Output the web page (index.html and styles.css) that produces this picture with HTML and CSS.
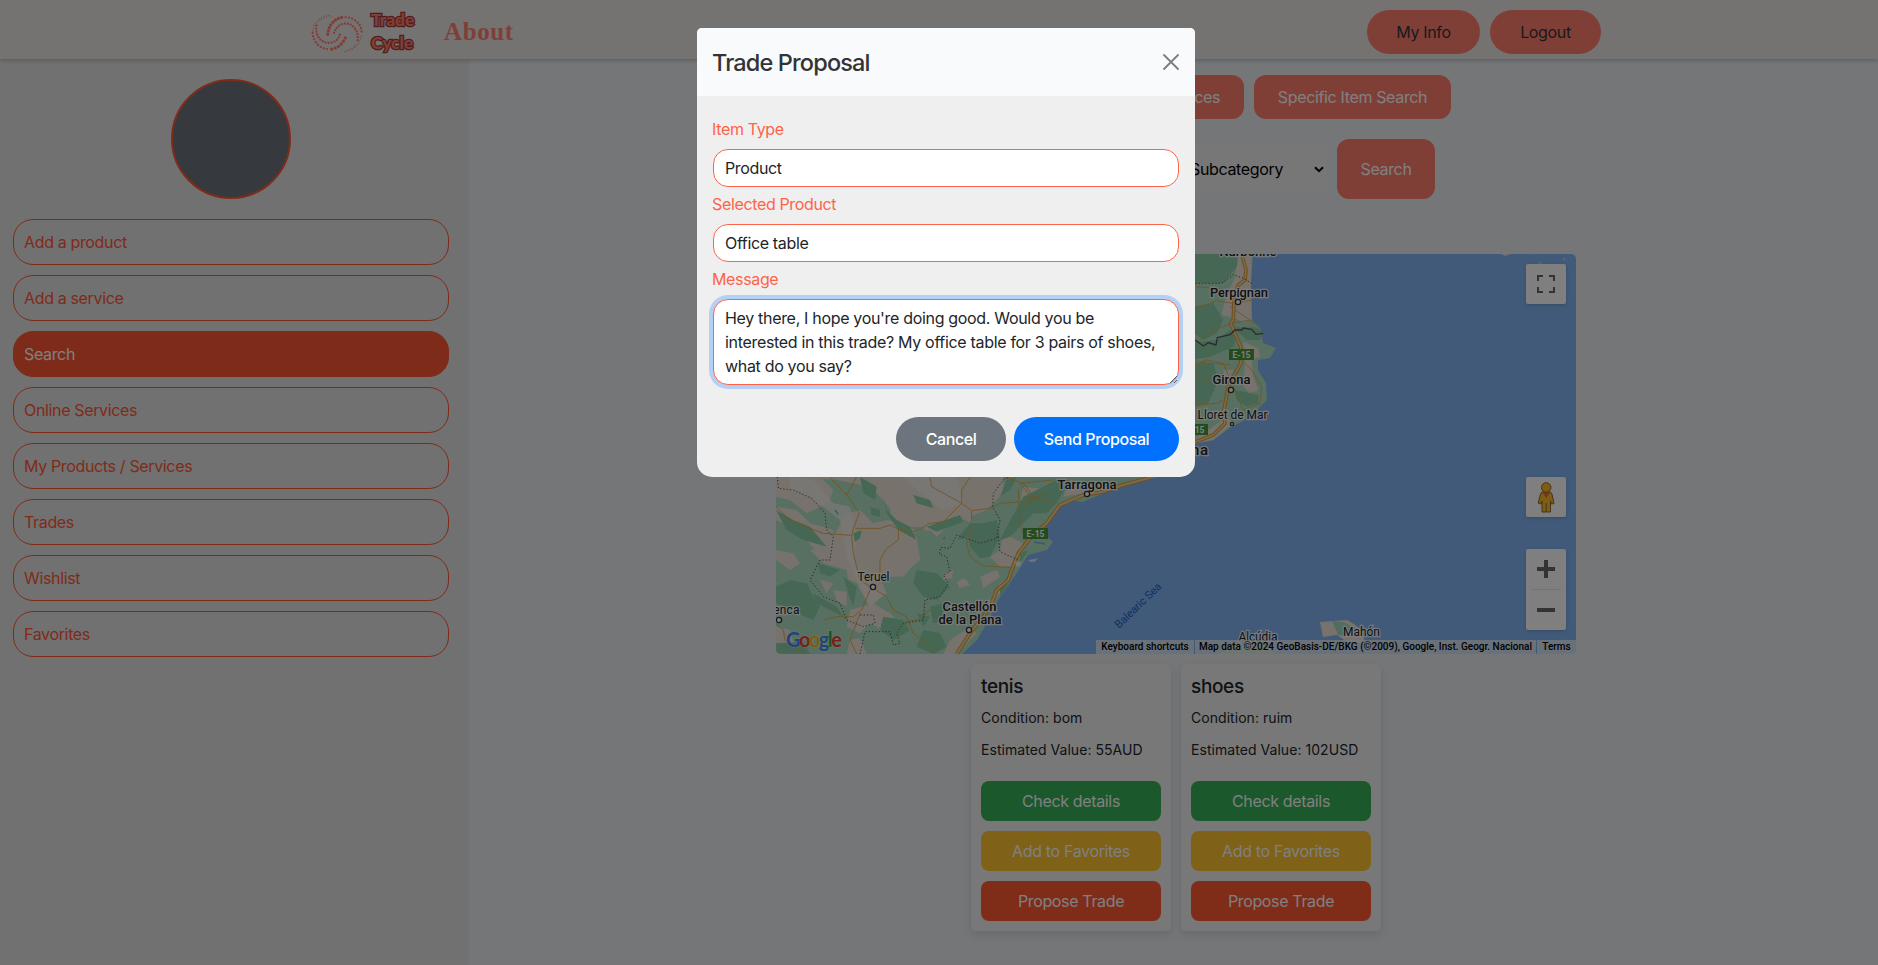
FILE: index.html
```html
<!DOCTYPE html>
<html lang="en">
<head>
<meta charset="utf-8">
<title>Trade Cycle</title>
<link rel="stylesheet" href="styles.css">
</head>
<body>
<header class="navbar">
  <div class="brand">
    <svg class="brand-mark" viewBox="0 0 156 116">
      <g fill="none" stroke="#ff7f71" stroke-linecap="round">
        <path d="M54 4C24 8 6 28 5 52" stroke-width="4" stroke-dasharray="0 8"/>
        <path d="M5 56C6 84 28 104 52 105" stroke-width="7" stroke-dasharray="0 10"/>
        <path d="M62 105C86 100 98 84 105 66" stroke-width="10" stroke-dasharray="0 11"/>
        <path d="M102 112C130 108 150 86 152 60" stroke-width="4" stroke-dasharray="0 8"/>
        <path d="M152 52C150 26 126 9 102 9" stroke-width="7" stroke-dasharray="0 10"/>
        <path d="M92 10C68 14 52 36 50 62" stroke-width="10" stroke-dasharray="0 10"/>
        <path d="M16 34C12 66 30 86 54 86C74 86 86 72 88 56" stroke-width="7" stroke-dasharray="0 9"/>
        <path d="M140 78C144 50 126 28 104 28C84 28 70 46 68 62" stroke-width="7" stroke-dasharray="0 9"/>
        <path d="M24 22C32 12 46 8 70 6" stroke-width="3" stroke-dasharray="0 9"/>
        <path d="M134 92C128 100 118 106 104 108" stroke-width="3" stroke-dasharray="0 9"/>
      </g>
    </svg>
    <div class="brand-name"><span>Trade</span><span>Cycle</span></div>
  </div>
  <a class="nav-about">About</a>
  <div class="nav-actions">
    <button class="pill">My Info</button>
    <button class="pill pill-logout">Logout</button>
  </div>
</header>

<div class="page">
  <aside class="sidebar">
    <div class="avatar"></div>
    <nav class="side-nav">
      <a class="side-link">Add a product</a>
      <a class="side-link">Add a service</a>
      <a class="side-link active">Search</a>
      <a class="side-link">Online Services</a>
      <a class="side-link">My Products / Services</a>
      <a class="side-link">Trades</a>
      <a class="side-link">Wishlist</a>
      <a class="side-link">Favorites</a>
    </nav>
  </aside>

  <main class="content">
    <div class="tabs">
      <button class="tab tab-products">Products</button>
      <button class="tab tab-services">Services</button>
      <button class="tab tab-specific">Specific Item Search</button>
    </div>
    <div class="filters">
      <div class="select select-category"></div>
      <div class="select select-sub"><span>Subcategory</span>
        <svg viewBox="0 0 10 7" width="10" height="7"><path d="M1 1.200 5 5.200 9 1.200" fill="none" stroke="#000" stroke-width="2"/></svg>
      </div>
      <button class="tab search-btn">Search</button>
    </div>

    <div class="map">
      <svg class="map-canvas" viewBox="0 0 800 400">
        <rect width="800" height="400" fill="#84b4f2"/>
        <path fill="#aee0c4" d="M0 0H477L475 29 476 66 484 74 487 89 500 94 494 104 482 106V116L490 129 491 146 474 163 454 174 437 186 419 190 381 223 347 231 307 248 294 246 284 253 271 271 266 278 277 288 271 296 252 301 244 314 234 329 222 346 211 369 201 386 186 400H0Z"/>
        <!-- southern coast and inland -->
        <g transform="translate(-6 206) scale(.33333)">
          <g fill="#f0e5da">
            <path d="M18 50H150L190 90 175 130 110 160 60 120 18 110Z"/>
            <path d="M60 50H700L700 100 650 150 600 170 560 130 520 160 560 190 500 210 440 215 400 190 350 180 310 190 270 150 230 160 200 210 180 260 120 270 160 310 230 330 235 360 290 380 340 340 400 350 450 290 430 220 470 210 380 170 340 120 300 80 200 60Z"/>
            <path d="M370 60H690L680 120 600 150 610 190 560 170 500 230 470 200 420 200 360 170Z"/>
            <path d="M18 140 80 150 120 190 190 210 200 300 150 290 110 240 60 200 18 180Z"/>
            <path d="M700 220 760 250 740 320 690 320 660 290 690 270Z"/>
            <path d="M260 220 360 210 440 230 450 300 390 350 330 350 350 400 300 440 280 400 250 330Z"/>
            <path d="M520 340 550 330 545 355 520 360ZM630 350 680 330 690 350 640 385ZM560 365 585 355 600 375 570 385Z"/>
            <path d="M18 270 70 280 90 310 60 330 18 300ZM150 360 190 370 170 400ZM190 390 230 395 230 440 200 420ZM240 450 310 430 360 460 400 500 360 520 300 490 270 520 230 500Z"/>
            <path d="M690 370 720 350 690 400 650 440ZM540 540 600 500 620 520 560 582H520ZM18 500 60 510 80 582H18ZM240 540 270 535 290 582H230Z"/>
            <path d="M760 80 840 90 850 120 790 150 750 130ZM900 60 1000 90 880 110Z"/>
          </g>
          <g fill="#f4f0ec" opacity=".75">
            <path d="M60 50 130 60 190 130 240 140 260 220 250 290 290 380 340 400 300 440 270 390 230 290 210 180 120 110 60 90Z"/>
            <path d="M400 50H560L580 130 520 150 440 90Z"/>
          </g>
          <g fill="#8ccfa6">
            <path d="M270 50 320 80 315 120 280 100ZM300 140 330 150 330 170 305 165ZM430 105 480 120 490 145 440 130ZM340 110 350 150 380 180 420 200 440 240 385 210 350 160Z"/>
            <path d="M600 190 640 190 680 180 690 230 660 290 630 295 600 260 595 230 560 240ZM690 240 710 200 760 110 860 60 900 60 860 130 830 160 790 160 760 190 720 230Z"/>
            <path d="M18 380 60 360 110 370 130 410 150 440 130 480 80 460 40 440 18 430ZM145 310 210 330 180 350 150 340ZM220 350 260 380 250 440 235 400ZM130 400 200 440 220 470 140 430Z"/>
            <path d="M440 330 500 340 540 380 500 420 460 410 430 370ZM340 470 400 480 420 510 370 540 330 510ZM460 510 510 520 530 560 490 582 440 560ZM480 440 520 430 520 480 490 490ZM250 220 275 210 270 235 255 245ZM750 280 775 270 750 310ZM690 380 715 370 690 410Z"/>
            <path d="M18 150 70 180 120 200 170 260 100 240 50 210ZM470 200 570 165 580 185 500 215ZM710 60 740 50 720 90 690 110ZM18 550 100 545 120 582H18ZM440 460 480 470 460 500Z"/>
          </g>
          <g fill="none" stroke="#e2ac4c" stroke-width="2.800" stroke-linejoin="round">
            <path d="M180 52 230 105 260 50M230 105 268 160 250 205 245 230 250 280 270 360 300 380 350 410 370 450 410 470 430 520 480 560 490 580"/>
            <path d="M18 140 60 180 120 205 160 220 245 226M255 205H330L360 195 390 210 435 215 480 190 520 185 575 130 605 152 660 145 690 130 760 125 830 100"/>
            <path d="M480 52 485 80 575 130 575 90 600 52M605 152V200L590 250 600 290 640 318 725 322"/>
            <path d="M330 370 330 300 350 265 385 240 385 208M300 390 275 450 250 470 200 470 160 480M270 460 255 500 240 540 260 582M18 490 40 510 45 540 100 582M410 485 440 480 480 450"/>
            <path d="M745 90 750 190 765 240M700 50 760 70 790 110 850 130M750 150 790 120 750 70 850 60"/>
          </g>
          <g fill="none" stroke-linejoin="round">
            <path d="M1145 52 1060 75 1000 95 940 105 870 135 830 190 780 235 745 280 725 330 715 360 680 390 665 430 640 470 600 520 560 582" stroke="#dd9c34" stroke-width="12"/>
            <path d="M1145 52 1060 75 1000 95 940 105 870 135 830 190 780 235 745 280 725 330 715 360 680 390 665 430 640 470 600 520 560 582" stroke="#f5d59a" stroke-width="6"/>
            <path d="M22 50 25 85 70 90 125 115 165 160 170 210 190 230 180 300 150 300 120 360 160 410 210 430 230 480 280 500 315 490 310 465 270 465M270 582 285 515 360 515 370 555 390 550 380 520 400 490 460 480 465 420 510 410 535 370 520 345 540 335 530 290 508 282 512 262 540 265 560 225 630 250 680 235 690 180 668 140 670 100 700 60 720 50M685 230 690 275 745 300" stroke="#555" stroke-width="3" stroke-dasharray="4 6"/>
          </g>
          <path fill="#fff" d="M775 300 803 295 795 305 780 306ZM735 305 755 305 750 320 738 318Z" opacity=".7"/>
          <path fill="none" stroke="#78a8f0" stroke-width="4" d="M195 150 205 163M520 237 525 232M793 246 825 252"/>
        </g>
        <!-- northern coast -->
        <g transform="translate(404 -14) scale(.33333)">
          <path fill="#f0e5da" d="M175 42H215L213 130 215 240 190 245 150 230 125 225 135 180 165 110ZM190 305 235 325 240 350 215 360 220 410 235 450 210 460 190 440 195 370ZM130 390 160 390 140 430ZM100 560 140 530 160 550 100 600 46 610 50 590Z"/>
          <g fill="#8ccfa6">
            <path d="M30 42H175L170 80 130 130 60 130 30 125ZM30 200 100 190 130 240 110 280 70 300 30 270Z"/>
            <path d="M46 305 110 300 150 270 170 290 160 320 90 350 30 360ZM46 370 100 370 115 420 85 490 46 500ZM165 450 235 465 235 490 200 500 170 480ZM160 262 230 262 250 280 240 300 200 300Z"/>
          </g>
          <g fill="none" stroke="#e2ac4c" stroke-width="2.800">
            <path d="M46 208 110 182 160 190 215 180M60 300 100 270 155 250 210 240 245 265M46 375 80 360 130 370 160 440M46 495 110 490 130 480M160 440 190 510 240 490 245 440 215 390 185 360M150 375 46 365M46 140 110 145 160 160M150 200 210 240M46 395 90 430"/>
          </g>
          <g fill="none" stroke-linejoin="round">
            <path d="M185 42 198 90 195 120 175 135 162 180 160 240 152 250 182 320 182 370 145 440 130 520 135 550 100 585 46 606" stroke="#dd9c34" stroke-width="11"/>
            <path d="M185 42 198 90 195 120 175 135 162 180 160 240 152 250 182 320 182 370 145 440 130 520 135 550 100 585 46 606" stroke="#f5d59a" stroke-width="5"/>
            <path d="M46 130H125L160 104 190 115 215 130" stroke="#555" stroke-width="3" stroke-dasharray="4 6"/>
            <path d="M46 300 70 318 85 308 108 315 112 293 150 284 165 270 185 270 190 264 215 268 228 283 250 280" stroke="#555" stroke-width="4"/>
          </g>
          <path fill="#f0e5da" d="M965 42H992L975 48Z"/>
          <path fill="#aee0c4" d="M1055 42H1062V46ZM1070 68 1085 66 1085 73ZM1148 58 1157 52 1154 62Z"/>
        </g>
        <!-- islands -->
        <path fill="#f0e5da" d="M544 368 557 367 571 366 578 370 586 376 589 389 571 388 561 381 547 383Z"/>
        <path fill="#a5dbbb" d="M556 367 567 368 580 374 575 382 562 381ZM442 400 464 388 490 390 500 400Z"/>

        <g fill="#4a9a36"><rect x="453" y="95" width="25" height="11"/><rect x="407" y="170" width="25" height="11"/><rect x="247" y="274" width="25" height="11"/></g>
        <g class="road-tag"><text x="465.500" y="104">E-15</text><text x="419.500" y="179">E-15</text><text x="259.500" y="283">E-15</text></g>
        <g class="city">
          <text x="472" y="2" textLength="57">Narbonne</text>
          <text x="463" y="43" textLength="58">Perpignan</text>
          <text x="455.500" y="130" textLength="38">Girona</text>
          <text class="small" x="456.500" y="165" textLength="70">Lloret de Mar</text>
          <text class="big" x="396" y="201" textLength="72">Barcelona</text>
          <text x="311" y="235" textLength="59">Tarragona</text>
          <text class="small" x="97.500" y="327" textLength="32">Teruel</text>
          <text class="small" x="3" y="360" textLength="41">Cuenca</text>
          <text x="193.500" y="357" textLength="54">Castellón</text>
          <text x="194" y="370" textLength="63">de la Plana</text>
          <text class="small" x="585.500" y="382" textLength="37">Mahón</text>
          <text class="small" x="482" y="387" textLength="39">Alcúdia</text>
        </g>
        <g fill="#fff" stroke="#333" stroke-width="1.300">
          <circle cx="462" cy="48" r="2.600"/><circle cx="455" cy="136" r="2.600"/><circle cx="456" cy="170" r="1.600"/><circle cx="311" cy="240" r="2.600"/><circle cx="97" cy="333" r="2.600"/><circle cx="3" cy="366" r="2.600"/><circle cx="193" cy="376" r="2.600"/>
        </g>
        <text class="sea" transform="translate(343 375) rotate(-44)" textLength="60">Balearic Sea</text>
        <text class="google" x="10" y="393" textLength="56"><tspan fill="#4285f4">G</tspan><tspan fill="#ea4335">o</tspan><tspan fill="#fbbc05">o</tspan><tspan fill="#4285f4">g</tspan><tspan fill="#34a853">l</tspan><tspan fill="#ea4335">e</tspan></text>
      </svg>
      <div class="map-control fullscreen"><svg viewBox="0 0 18 18" width="18" height="18"><path fill="#666" d="M0 0H6V2H2V6H0ZM12 0H18V6H16V2H12ZM0 12H2V16H6V18H0ZM16 12H18V18H12V16H16Z"/></svg></div>
      <div class="map-control pegman"><svg viewBox="0 0 18 32" width="18" height="32"><path d="M5 11H13.500L15 13 17 22.500 14.500 23 13.500 20V31H5V20L4 23 1.200 22 3.500 13Z" fill="#fbb829" stroke="#8b6a35"/><path d="M5 11H13.500L9.200 17Z" fill="#e0703a"/><circle cx="9.200" cy="6.500" r="4.800" fill="#fbb829" stroke="#8b6a35"/><path d="M9.200 22V31" stroke="#8b6a35"/></svg></div>
      <div class="map-control zoom">
        <div class="zoom-in"><svg viewBox="0 0 18 18" width="18" height="18"><path fill="#666" d="M7 0H11V7H18V11H11V18H7V11H0V7H7Z"/></svg></div>
        <div class="zoom-out"><svg viewBox="0 0 18 18" width="18" height="18"><path fill="#666" d="M0 7H18V11H0Z"/></svg></div>
      </div>
      <div class="map-legal"><span class="keys">Keyboard shortcuts</span><span class="data">Map data ©2024 GeoBasis-DE/BKG (©2009), Google, Inst. Geogr. Nacional</span><span class="terms">Terms</span></div>
    </div>

    <div class="cards">
      <article class="card">
        <h3>tenis</h3>
        <p>Condition: bom</p>
        <p>Estimated Value: 55AUD</p>
        <div class="card-actions">
          <button class="details">Check details</button>
          <button class="favorite">Add to Favorites</button>
          <button class="propose">Propose Trade</button>
        </div>
      </article>
      <article class="card">
        <h3>shoes</h3>
        <p>Condition: ruim</p>
        <p>Estimated Value: 102USD</p>
        <div class="card-actions">
          <button class="details">Check details</button>
          <button class="favorite">Add to Favorites</button>
          <button class="propose">Propose Trade</button>
        </div>
      </article>
    </div>
  </main>
</div>

<div class="backdrop">
  <div class="modal">
    <div class="modal-header">
      <h2>Trade Proposal</h2>
      <svg viewBox="0 0 16 16" width="16" height="16"><path d="M1 1 15 15M15 1 1 15" stroke="#7b7d7f" stroke-width="1.800" stroke-linecap="round"/></svg>
    </div>
    <div class="modal-body">
      <label>Item Type</label>
      <div class="field">Product</div>
      <label>Selected Product</label>
      <div class="field">Office table</div>
      <label>Message</label>
      <div class="field message">Hey there, I hope you're doing good. Would you be<br>interested in this trade? My office table for 3 pairs of shoes,<br>what do you say?
        <svg class="grip" viewBox="0 0 8 8" width="8" height="8"><path d="M1 8 8 1M5 8 8 5" stroke="#555" stroke-width=".9"/></svg>
      </div>
    </div>
    <div class="modal-footer">
      <button class="cancel">Cancel</button>
      <button class="send">Send Proposal</button>
    </div>
  </div>
</div>
</body>
</html>
```

FILE: styles.css
```css
* { box-sizing: border-box; }
html, body { margin: 0; height: 100%; overflow: hidden; }
body {
  font: 16px/24px Inter, "Noto Sans", sans-serif;
  letter-spacing: -0.35px;
  color: #212529;
  background: #e9ecef;
}
button {
  border: 0;
  padding: 0;
  font: inherit;
  letter-spacing: inherit;
  white-space: nowrap;
}

/* Top bar */
.navbar {
  position: relative;
  height: 59px;
  display: flex;
  align-items: center;
  padding: 0 277px 0 311px;
  background: #ebe4e4;
  box-shadow: 0 2px 4px rgba(0, 0, 0, .18);
}
.brand { display: flex; align-items: center; gap: 8px; width: 133px; padding-top: 7px; }
.brand-mark { width: 52px; height: 39px; }
.brand-name {
  display: flex;
  flex-direction: column;
  font: 900 17.5px/23px Lato, sans-serif;
  letter-spacing: -0.1px;
  color: #ff7f71;
  padding-bottom: 4px;
  -webkit-text-stroke: 2.5px #a33a34;
  paint-order: stroke fill;
}
.nav-about {
  font: bold 25px/30px "Liberation Serif", serif;
  letter-spacing: .6px;
  color: #ff7f71;
  padding-top: 4px;
}
.nav-actions { margin-left: auto; display: flex; gap: 10px; padding-top: 5px; }
.pill {
  width: 113px;
  height: 44px;
  border-radius: 22px;
  background: #ff7f6f;
  color: #333;
}
.pill-logout { width: 111px; }

.page { display: flex; height: calc(100% - 59px); }

/* Sidebar */
.sidebar { width: 469px; padding: 20px 20px 0 13px; background: #e2e2e2; }
.avatar {
  width: 120px;
  height: 120px;
  margin: 0 auto 20px;
  border: 2px solid #ff5733;
  border-radius: 50%;
  background: #6c757d;
}
.side-nav { display: flex; flex-direction: column; gap: 10px; }
.side-link {
  height: 46px;
  padding: 10px;
  border: 1px solid #ff5733;
  border-radius: 20px;
  color: #ff5733;
}
.side-link.active { background: #ff5733; color: #fff; }

/* Search area */
.content { flex: 1; display: flex; flex-direction: column; align-items: center; padding-top: 16px; }
.tabs { display: flex; gap: 10px; }
.tab {
  height: 44px;
  border-radius: 12px;
  background: #ff7f6f;
  color: #fff;
}
.tab-products { width: 169px; }
.tab-services { width: 169px; padding-right: 24px; text-align: right; }
.tab-specific { width: 197px; }
.filters { display: flex; align-items: center; gap: 10px; margin: 20px 0 55px; }
.select { height: 50px; border-radius: 5px; background: #efefef; }
.select-category { width: 205px; }
.select-sub {
  width: 200px;
  padding: 0 3px 0 63px;
  display: flex;
  align-items: center;
  justify-content: space-between;
  color: #000;
}
.search-btn { width: 98px; height: 60px; }

/* Map */
.map {
  position: relative;
  width: 800px;
  height: 400px;
  margin-left: 5px;
  border-radius: 5px;
  overflow: hidden;
  letter-spacing: 0;
}
.map-canvas { display: block; width: 800px; height: 400px; }
.map-canvas text { font-family: Roboto, sans-serif; }
.city text {
  font-size: 13px;
  font-weight: 500;
  text-anchor: middle;
  fill: #222;
  stroke: rgba(255, 255, 255, .8);
  stroke-width: 2.5px;
  paint-order: stroke;
}
.city text.small { font-size: 12px; font-weight: 400; }
.city text.big { font-size: 15px; }
.road-tag text { font-size: 8.5px; font-weight: 700; fill: #fff; text-anchor: middle; }
.map-canvas .sea { font-size: 11px; fill: #1a62c4; }
.map-canvas .google { font-family: Lato, sans-serif; font-size: 20px; font-weight: 700; stroke: rgba(255, 255, 255, .5); stroke-width: 1px; paint-order: stroke; }
.map-control {
  position: absolute;
  right: 10px;
  width: 40px;
  height: 40px;
  display: flex;
  align-items: center;
  justify-content: center;
  border-radius: 2px;
  background: #fff;
  box-shadow: 0 1px 4px -1px rgba(0, 0, 0, .3);
}
.map-control svg { display: block; }
.fullscreen { top: 10px; }
.pegman { top: 223px; }
.zoom { top: 295px; height: 81px; flex-direction: column; justify-content: flex-start; }
.zoom > div { height: 40px; width: 30px; display: flex; align-items: center; justify-content: center; }
.zoom .zoom-out { height: 41px; border-top: 1px solid #e6e6e6; }
.map-legal {
  position: absolute;
  right: 0;
  bottom: 0;
  display: flex;
  height: 14px;
  font: 500 10px/14px Roboto, sans-serif;
  color: #000;
  white-space: nowrap;
}
.map-legal span { background: rgba(245, 245, 245, .7); text-align: center; }
.keys { width: 98px; margin-right: 1px; }
.data { width: 341px; margin-right: 1px; }
.terms { width: 39px; }

/* Result cards */
.cards { display: flex; gap: 10px; margin-top: 10px; margin-left: 5px; }
.card {
  width: 200px;
  height: 267px;
  padding: 11px 10px 10px;
  border-radius: 5px;
  background: #f1f1f1;
  box-shadow: 0 4px 8px rgba(0, 0, 0, .1);
}
.card h3 { margin: 0 0 7px; font-size: 19px; line-height: 24px; font-weight: 500; }
.card p { margin: 0 0 8px; font-size: 14px; letter-spacing: .05px; }
.card p + p { margin-bottom: 19px; }
.card-actions { display: flex; flex-direction: column; gap: 10px; }
.card-actions button { height: 40px; border-radius: 8px; color: #fff; }
.details { background: #36b056; }
.favorite { background: #ffc230; }
.propose { background: #ff5833; }

/* Dialog */
.backdrop {
  position: fixed;
  inset: 0;
  display: flex;
  align-items: flex-start;
  padding: 28px 0 0 697px;
  background: rgba(0, 0, 0, .5);
}
.modal {
  width: 498px;
  height: 449px;
  border-radius: 5px 5px 15px 15px;
  overflow: hidden;
  background: #efefef;
}
.modal-header {
  height: 68px;
  padding: 0 16px 0 15px;
  display: flex;
  align-items: center;
  justify-content: space-between;
  background: #f8fafc;
}
.modal-header h2 { margin: 1px 0 0; font-size: 23.5px; font-weight: 500; letter-spacing: -0.85px; color: #333; }
.modal-body { padding: 16px 16px 0; }
.modal-body label { display: block; margin: 5px 0 8px -1px; color: #ff6347; }
.field {
  height: 38px;
  padding: 6px 11px;
  border: 1px solid #ff6347;
  border-radius: 15px;
  background: #fff;
  white-space: nowrap;
}
.message { position: relative; height: 86px; letter-spacing: -0.32px; box-shadow: 0 0 0 4px #b4d0f5; }
.grip { position: absolute; right: 1px; bottom: 1px; }
.modal-footer { display: flex; justify-content: flex-end; gap: 8px; padding: 32px 16px 16px; }
.modal-footer button { height: 44px; border-radius: 22px; color: #fff; font-weight: 500; letter-spacing: -0.4px; }
.cancel { width: 110px; background: #6c757d; }
.send { width: 165px; background: #0070ff; }
```
